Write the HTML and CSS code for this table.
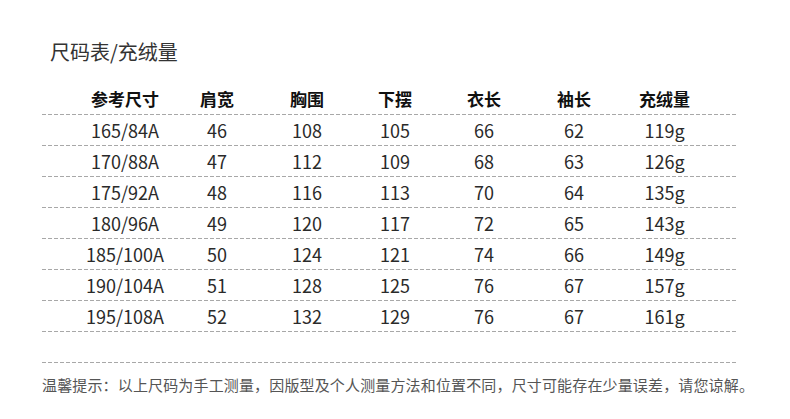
FILE: index.html
```html
<!DOCTYPE html>
<html lang="zh-CN">
<head>
<meta charset="utf-8">
<title>尺码表/充绒量</title>
<link rel="stylesheet" href="styles.css">
</head>
<body>
<div class="page">
  <h1 class="title">尺码表/充绒量</h1>
  <div class="table">
    <div class="row head">
      <span>参考尺寸</span><span>肩宽</span><span>胸围</span><span>下摆</span><span>衣长</span><span>袖长</span><span>充绒量</span>
    </div>
    <div class="line"></div>
    <div class="row"><span>165/84A</span><span>46</span><span>108</span><span>105</span><span>66</span><span>62</span><span>119g</span></div>
    <div class="line"></div>
    <div class="row"><span>170/88A</span><span>47</span><span>112</span><span>109</span><span>68</span><span>63</span><span>126g</span></div>
    <div class="line"></div>
    <div class="row"><span>175/92A</span><span>48</span><span>116</span><span>113</span><span>70</span><span>64</span><span>135g</span></div>
    <div class="line"></div>
    <div class="row"><span>180/96A</span><span>49</span><span>120</span><span>117</span><span>72</span><span>65</span><span>143g</span></div>
    <div class="line"></div>
    <div class="row"><span>185/100A</span><span>50</span><span>124</span><span>121</span><span>74</span><span>66</span><span>149g</span></div>
    <div class="line"></div>
    <div class="row"><span>190/104A</span><span>51</span><span>128</span><span>125</span><span>76</span><span>67</span><span>157g</span></div>
    <div class="line"></div>
    <div class="row"><span>195/108A</span><span>52</span><span>132</span><span>129</span><span>76</span><span>67</span><span>161g</span></div>
    <div class="line"></div>
    <div class="row empty"></div>
    <div class="line"></div>
  </div>
  <p class="note">温馨提示：以上尺码为手工测量，因版型及个人测量方法和位置不同，尺寸可能存在少量误差，请您谅解。</p>
</div>
</body>
</html>
```
FILE: styles.css
```css
html, body {
  margin: 0;
  padding: 0;
  background: #ffffff;
}
body {
  font-family: "Noto Sans CJK SC", "Noto Sans", sans-serif;
  color: #333333;
}
.page {
  width: 790px;
  height: 419px;
  overflow: hidden;
  padding-top: 40px;
  box-sizing: border-box;
}
.title {
  margin: 0 0 0 50px;
  font-size: 20px;
  line-height: 24px;
  font-weight: normal;
  color: #333333;
  height: 24px;
}
.table {
  margin: 20px 0 0 42px;
  width: 694px;
}
.row {
  display: grid;
  grid-template-columns: 92px 92px 88px 88px 90px 90px 91px;
  padding-left: 37px;
  height: 30px;
  align-items: center;
  font-size: 18px;
  line-height: 30px;
  color: #2a2a2a;
}
.row span {
  text-align: center;
  white-space: nowrap;
}
.row.head {
  font-size: 17px;
  font-weight: bold;
  color: #111111;
}
.line {
  height: 1px;
  background: repeating-linear-gradient(to right, #a8a8a8 0 4px, transparent 4px 6px);
}
.note {
  margin: 12px 0 0 42px;
  font-size: 15px;
  line-height: 20px;
  letter-spacing: 0.15px;
  color: #555555;
  white-space: nowrap;
}
```
